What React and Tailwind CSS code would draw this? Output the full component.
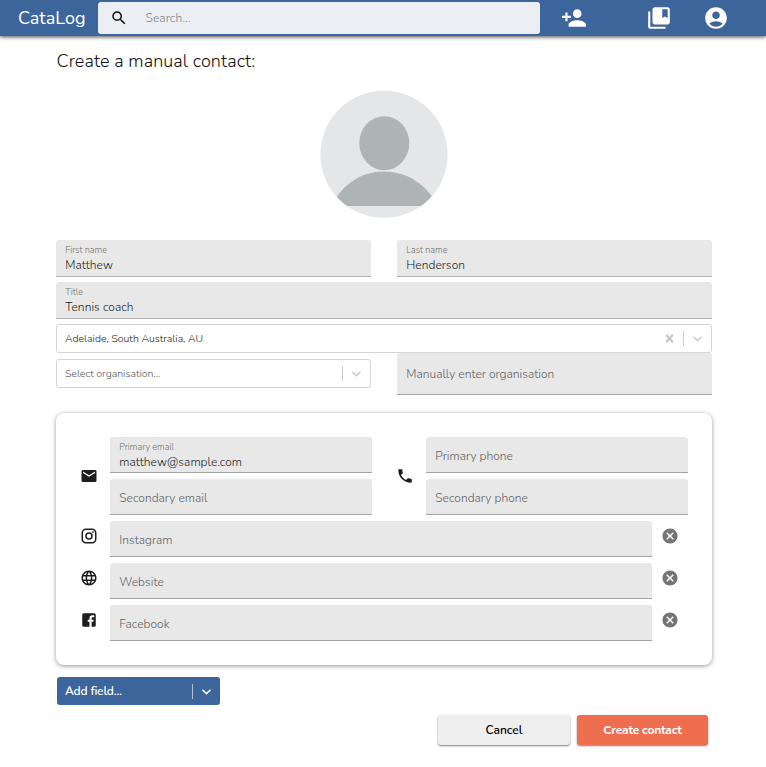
import React from "react";
import {
  MdSearch,
  MdPersonAdd,
  MdCollectionsBookmark,
  MdAccountCircle,
  MdEmail,
  MdPhone,
  MdLanguage,
  MdCancel,
} from "react-icons/md";

function Chevron({ className }) {
  return (
    <svg viewBox="0 0 20 20" className={"size-[15px] " + className} fill="currentColor">
      <path d="M4.516 7.548c0.436-0.446 1.043-0.481 1.576 0l3.908 3.747 3.908-3.747c0.533-0.481 1.141-0.446 1.574 0 0.436 0.445 0.408 1.197 0 1.615-0.406 0.418-4.695 4.502-4.695 4.502-0.217 0.223-0.502 0.335-0.787 0.335s-0.57-0.112-0.789-0.335c0 0-4.287-4.084-4.695-4.502s-0.436-1.17 0-1.615z" />
    </svg>
  );
}

function Cross() {
  return (
    <svg viewBox="0 0 20 20" className="size-[15px] text-[#c4c4c4]" fill="currentColor" stroke="currentColor" strokeWidth="0.5">
      <path d="M14.348 14.849c-0.469 0.469-1.229 0.469-1.697 0l-2.651-3.030-2.651 3.029c-0.469 0.469-1.229 0.469-1.697 0-0.469-0.469-0.469-1.229 0-1.697l2.758-3.15-2.759-3.152c-0.469-0.469-0.469-1.228 0-1.697s1.228-0.469 1.697 0l2.652 3.031 2.651-3.031c0.469-0.469 1.228-0.469 1.697 0s0.469 1.229 0 1.697l-2.758 3.152 2.758 3.15c0.469 0.469 0.469 1.229 0 1.698z" />
    </svg>
  );
}

function Instagram() {
  return (
    <svg viewBox="0 0 24 24" className="size-[18px]" fill="currentColor">
      <path d="M7.8 2h8.4C19.4 2 22 4.6 22 7.8v8.4a5.8 5.8 0 0 1-5.8 5.8H7.8C4.6 22 2 19.4 2 16.2V7.8A5.8 5.8 0 0 1 7.8 2m-.2 2A3.6 3.6 0 0 0 4 7.600v8.800C4 18.390 5.610 20 7.600 20h8.800a3.600 3.600 0 0 0 3.600-3.600V7.600C20 5.610 18.390 4 16.400 4H7.600m9.650 1.500a1.250 1.250 0 1 1 0 2.500 1.250 1.250 0 0 1 0-2.500M12 7a5 5 0 1 1 0 10 5 5 0 0 1 0-10m0 2a3 3 0 1 0 0 6 3 3 0 0 0 0-6z" />
    </svg>
  );
}

function Facebook() {
  return (
    <svg viewBox="0 0 24 24" className="size-[18px]" fill="currentColor">
      <path d="M5 3h14a2 2 0 0 1 2 2v14a2 2 0 0 1-2 2h-3.500v-6.800h2.300l.4-2.700h-2.700V9.800c0-.8.4-1.400 1.500-1.400H19V5.600h-2.500c-2.600 0-3.900 1.600-3.900 3.900v2h-2.300v2.700h2.300V21H5a2 2 0 0 1-2-2V5a2 2 0 0 1 2-2z" />
    </svg>
  );
}

function Field({ label, value, className = "h-[36px]", line = "border-[#a3a3a3]", pad = "pt-[3px]" }) {
  return (
    <div className={"min-w-0 rounded-t-[3px] border-b bg-[#e8e8e8] px-[9.25px] " + line + " " + className}>
      {value ? (
        <>
          <div className="pt-[4px] text-[9px] leading-[12px] text-[#707070]">{label}</div>
          <div className="pt-px text-[12px] leading-[16px] tracking-[0.04px] text-[#1c1c1c]">{value}</div>
        </>
      ) : (
        <div className={"flex h-full items-center text-[12px] leading-[16px] tracking-[0.02px] text-[#606060] " + pad}>{label}</div>
      )}
    </div>
  );
}

function LinkRow({ icon, label }) {
  return (
    <div className="flex">
      <div className="w-[30px] shrink-0 pt-[6px] text-[#1d1d1d]">{icon}</div>
      <Field label={label} className="h-[36px] flex-1" />
      <div className="flex w-[36px] justify-center pt-[6px]">
        <MdCancel className="size-[18px] text-[#747474]" />
      </div>
    </div>
  );
}

export default function App() {
  return (
    <div className="min-h-[767px] bg-white font-['Nunito','Lato','Open_Sans',sans-serif] font-light text-[#111]">
      <header className="flex h-[36px] items-center bg-[#3c659b] shadow-[0_1px_4px_rgba(0,0,0,0.7)]">
        <div className="w-[97.5px] pl-[18px] text-[18px] leading-[24px] font-normal text-white">CataLog</div>
        <div className="flex h-[32px] w-[442.5px] items-center rounded-[3px] bg-[#ebeef3] pl-[12px]">
          <MdSearch className="size-[18px] text-[#111]" />
          <span className="pl-[18px] text-[12px] tracking-[0.1px] text-[#7d8187]">Search...</span>
        </div>
        <MdPersonAdd className="ml-[21px] size-[26px] text-white" />
        <MdCollectionsBookmark className="ml-[59px] size-[26px] text-white" />
        <MdAccountCircle className="ml-[31px] size-[26px] text-white" />
      </header>

      <main className="ml-[56px] w-[656px]">
        <h1 className="pt-[13px] pl-[0.5px] text-[18px] leading-[24px] font-light tracking-[0.1px]">Create a manual contact:</h1>
        <div className="mt-[17px] flex h-[129px] justify-center">
          <svg viewBox="0 0 128 128" className="size-[128px]">
            <defs>
              <clipPath id="avatar"><circle cx="64" cy="64.300" r="63.600" /></clipPath>
            </defs>
            <g clipPath="url(#avatar)">
              <rect width="128" height="128" fill="#e4e6e7" />
              <ellipse cx="64.300" cy="53.200" rx="25" ry="27" fill="#aeb4b6" />
              <path d="M12 116C22 93 43 81.500 64 81.500S107 93 117 116z" fill="#aeb4b6" />
            </g>
          </svg>
        </div>

        <div className="mt-[21px] flex justify-between">
          <Field label="First name" value="Matthew" className="h-[37px] w-[315px]" line="border-[#b4b4b4]" />
          <Field label="Last name" value="Henderson" className="h-[37px] w-[315px]" line="border-[#b4b4b4]" />
        </div>
        <Field label="Title" value="Tennis coach" className="mt-[5px] h-[37px]" line="border-[#b4b4b4]" />

        <div className="mt-[5px] flex h-[29px] items-center rounded-[3px] border border-[#d4d4d4] pr-[6px] pl-[8px]">
          <span className="flex-1 pt-px text-[10.5px] text-[#222]">Adelaide, South Australia, AU</span>
          <Cross />
          <span className="mx-[6px] h-[15px] w-px bg-[#cccccc]" />
          <Chevron className="text-[#cccccc]" />
        </div>
        <div className="flex justify-between">
          <div className="mt-[6px] flex h-[29px] w-[315px] items-center rounded-[3px] border border-[#d4d4d4] pr-[6px] pl-[8px]">
            <span className="flex-1 text-[10.5px] text-[#555]">Select organisation...</span>
            <span className="mx-[6px] h-[15px] w-px bg-[#cccccc]" />
            <Chevron className="text-[#cccccc]" />
          </div>
          <Field label="Manually enter organisation" className="h-[42px] w-[315px]" pad="pt-px" />
        </div>

        <section className="mt-[18px] h-[252px] rounded-[8px] bg-white px-[24px] pt-[24px] shadow-[0_1px_4px_rgba(0,0,0,0.42)]">
          <div className="flex">
            <div className="flex w-[30px] shrink-0 items-center text-[#1d1d1d]">
              <MdEmail className="size-[18px]" />
            </div>
            <div className="flex w-[262px] flex-col gap-[6px]">
              <Field label="Primary email" value="matthew@sample.com" />
              <Field label="Secondary email" />
            </div>
            <div className="flex w-[54px] items-center justify-center pl-[12px] text-[#1d1d1d]">
              <MdPhone className="size-[18px]" />
            </div>
            <div className="flex w-[262px] flex-col gap-[6px]">
              <Field label="Primary phone" />
              <Field label="Secondary phone" />
            </div>
          </div>
          <div className="mt-[6px] flex flex-col gap-[6px]">
            <LinkRow icon={<Instagram />} label="Instagram" />
            <LinkRow icon={<MdLanguage className="size-[18px]" />} label="Website" />
            <LinkRow icon={<Facebook />} label="Facebook" />
          </div>
        </section>

        <div className="mt-[12px] ml-px flex h-[28px] w-[163px] items-center rounded-[3px] bg-[#3c659b] pr-[6px] pl-[8px] text-white">
          <span className="flex-1 text-[12px] font-semibold tracking-[-0.18px]">Add field...</span>
          <span className="mx-[6px] h-[15px] w-px bg-[#b1c1d7]" />
          <Chevron className="text-white" />
        </div>

        <div className="mt-[10px] flex justify-end gap-[7px] pr-[4px]">
          <button className="h-[30px] w-[132px] rounded-[3px] bg-[#efefef] text-[12px] font-semibold text-black shadow-[0_1px_2px_rgba(0,0,0,0.5)]">Cancel</button>
          <button className="h-[30px] w-[131px] rounded-[3px] bg-[#ee6e4f] text-[12px] font-bold tracking-[-0.2px] text-white shadow-[0_1px_2px_rgba(0,0,0,0.5)]">Create contact</button>
        </div>
      </main>
    </div>
  );
}
